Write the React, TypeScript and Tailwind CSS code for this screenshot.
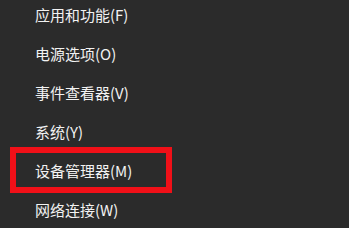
const items = [
  '应用和功能(F)',
  '电源选项(O)',
  '事件查看器(V)',
  '系统(Y)',
  '设备管理器(M)',
  '网络连接(W)',
];

export default function App() {
  return (
    <div
      className="w-[349px] h-[228px] overflow-hidden bg-[#2b2b2b] text-[#f2f2f2]"
      style={{ fontFamily: '"Noto Sans CJK SC", "Noto Sans", sans-serif' }}
    >
      <ul className="flex flex-col gap-[19px] pt-[5px] pl-[35px]">
        {items.map((label, i) => (
          <li key={label} className="relative h-[20px] leading-[20px] text-[15px]">
            {/* red highlight drawn over the selected entry */}
            {i === 4 && (
              <span className="absolute left-[-25px] top-[-14px] w-[162px] h-[46px] border-[6px] border-[#f01018]" />
            )}
            <span className="relative">{label}</span>
          </li>
        ))}
      </ul>
    </div>
  );
}
